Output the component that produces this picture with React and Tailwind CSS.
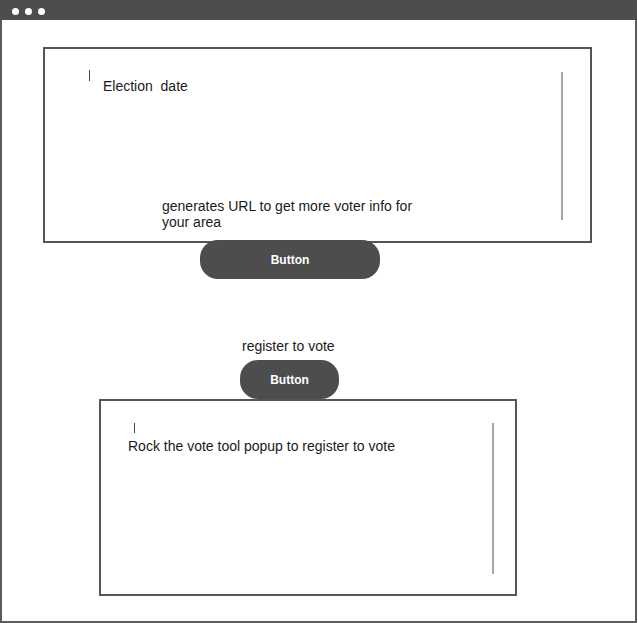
import React from 'react';

const font = { fontFamily: '"Liberation Sans", Arial, sans-serif' };

const WindowBar = () => (
  <div className="h-[20px] bg-[#4d4d4d] flex items-center pl-[12px] pt-[3px] gap-[6px]">
    <span className="size-[7px] rounded-full bg-white" />
    <span className="size-[7px] rounded-full bg-white" />
    <span className="size-[7px] rounded-full bg-white" />
  </div>
);

const PillButton = ({ className }) => (
  <button className={`h-[39px] rounded-[18px] bg-[#4d4d4d] text-white text-[12px] font-bold ${className}`}>
    Button
  </button>
);

export default function App() {
  return (
    <div className="w-[637px] h-[623px] flex flex-col bg-white text-[#1a1a1a]" style={font}>
      <WindowBar />
      <div className="flex-1 flex flex-col border-x-2 border-b-2 border-[#5c5c5c]">
        {/* election info box */}
        <div className="mt-[27px] ml-[41px] w-[549px] h-[196px] border-2 border-[#555] flex">
          <div className="flex-1 flex flex-col">
            <span className="mt-[21px] ml-[44px] h-[11px] w-px bg-[#444]" />
            <div className="ml-[58px] -mt-[3px] text-[14px] leading-[16px] whitespace-pre">Election  date</div>
            <div className="mt-auto mb-[11px] ml-[117px] w-[255px] text-[14px] leading-[16px]">
              generates URL to get more voter info for your area
            </div>
          </div>
          <div className="w-[2px] bg-[#a6a6a6] mt-[23px] mb-[21px] mr-[27px]" />
        </div>
        <PillButton className="-mt-[3px] ml-[198px] w-[180px]" />

        <div className="mt-[59px] ml-[240px] text-[14px] leading-[16px]">register to vote</div>
        <PillButton className="mt-[6px] ml-[238px] w-[99px]" />

        {/* register popup box */}
        <div className="ml-[97px] w-[418px] h-[197px] border-2 border-[#555] flex">
          <div className="flex-1 flex flex-col">
            <span className="mt-[22px] ml-[33px] h-[10px] w-px bg-[#444]" />
            <div className="ml-[27px] mt-[5px] text-[14px] leading-[16px]">
              Rock the vote tool popup to register to vote
            </div>
          </div>
          <div className="w-[2px] bg-[#a6a6a6] mt-[22px] mb-[20px] mr-[21px]" />
        </div>
      </div>
    </div>
  );
}
